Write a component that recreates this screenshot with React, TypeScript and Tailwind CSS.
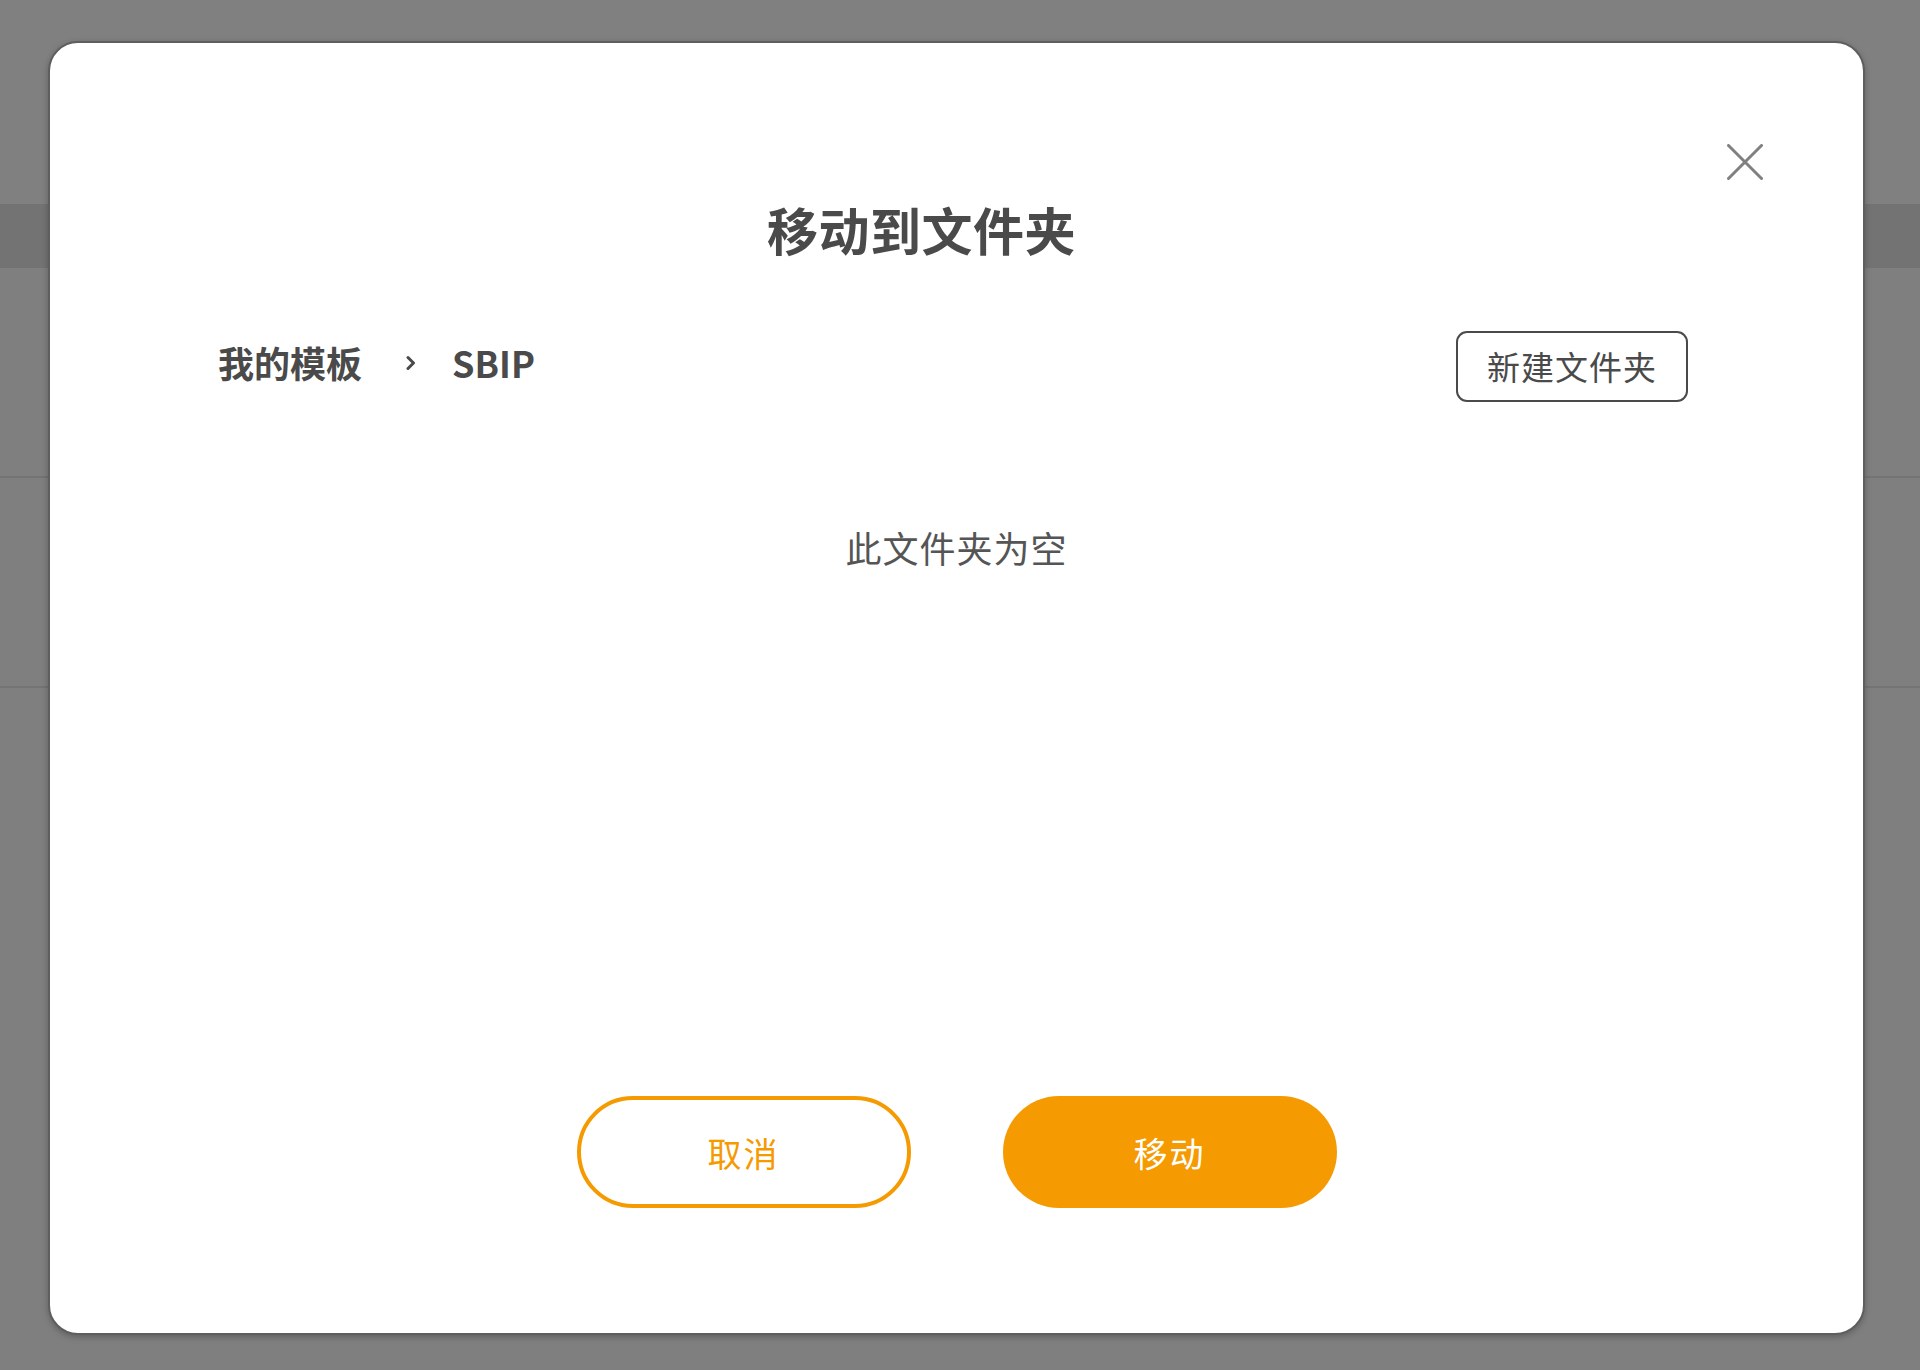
const font = "font-['Noto_Sans_CJK_SC','Noto_Sans',sans-serif]"

function Backdrop() {
  // dimmed page behind the dialog
  return (
    <div className="absolute inset-0 flex flex-col bg-[#7f7f7f]">
      <div className="h-[204px] bg-[#808080]" />
      <div className="h-[64px] bg-[#737373]" />
      <div className="h-[210px] border-b-2 border-[#747474]" />
      <div className="h-[210px] border-b-2 border-[#747474]" />
      <div className="flex-1" />
    </div>
  )
}

function CloseIcon() {
  return (
    <svg width="36" height="36" viewBox="0 0 36 36" fill="none">
      <path d="M1.5 1.5L34.5 34.5M34.5 1.5L1.5 34.5" stroke="#808080" strokeWidth="3" strokeLinecap="round" />
    </svg>
  )
}

function Chevron() {
  return (
    <svg width="10" height="16" viewBox="0 0 10 16" fill="none">
      <path d="M2 2.5L7.5 8L2 13.5" stroke="#4a4a4a" strokeWidth="3" strokeLinecap="round" strokeLinejoin="round" />
    </svg>
  )
}

export default function App() {
  return (
    <div className={`relative w-[1920px] h-[1370px] overflow-hidden ${font}`}>
      <Backdrop />

      <div className="relative pt-[41px] pl-[48px]">
        <div className="relative w-[1817px] h-[1294px] bg-white rounded-[30px] border-2 border-[#5e5e5e] shadow-[0_2px_6px_rgba(0,0,0,0.25)] flex flex-col">
          <button className="absolute right-[100px] top-[101px] p-0">
            <CloseIcon />
          </button>

          <div className="pt-[156px] pr-[70px] text-center">
            <h1 className="text-[51px] leading-[60px] font-bold text-[#4a4a4a] tracking-[0.5px]">移动到文件夹</h1>
          </div>

          <div className="mt-[72px] pl-[168px] pr-[175px] flex items-center justify-between">
            <div className="flex items-center text-[36px] leading-[44px] font-bold text-[#4a4a4a] -mt-[9px]">
              <span>我的模板</span>
              <span className="ml-[44px] mr-[36px] pt-[2px]">
                <Chevron />
              </span>
              <span>SBIP</span>
            </div>
            <button className="w-[232px] h-[71px] rounded-[11px] border-2 border-[#4a4a4a] text-[33px] leading-none text-[#4a4a4a] tracking-[1px]">
              新建文件夹
            </button>
          </div>

          <p className="mt-[121px] text-center text-[36px] leading-[48px] text-[#555555] tracking-[1px]">此文件夹为空</p>

          <div className="flex-1" />

          <div className="pb-[125px] flex justify-center gap-[92px]">
            <button className="w-[334px] h-[112px] rounded-full border-4 border-[#f59a00] bg-white text-[34px] text-[#f59a00] tracking-[2px]">
              取消
            </button>
            <button className="w-[334px] h-[112px] rounded-full bg-[#f59a00] text-[34px] text-white tracking-[2px]">
              移动
            </button>
          </div>
        </div>
      </div>
    </div>
  )
}
